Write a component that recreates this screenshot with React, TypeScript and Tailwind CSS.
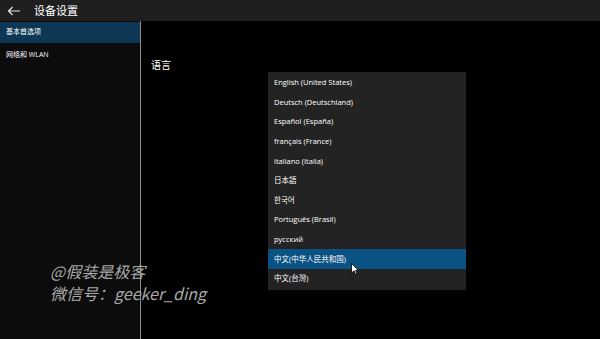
import React from "react";

const langs = [
  "English (United States)",
  "Deutsch (Deutschland)",
  "Español (España)",
  "français (France)",
  "italiano (Italia)",
  "日本語",
  "한국어",
  "Português (Brasil)",
  "русский",
  "中文(中华人民共和国)",
  "中文(台灣)",
];

const font = { fontFamily: '"Open Sans", "Noto Sans CJK SC", "Noto Sans CJK KR", sans-serif' };

const App = () => {
  return (
    <div className="w-[600px] h-[339px] bg-black flex flex-col overflow-hidden relative text-white" style={font}>
      {/* Title bar */}
      <div className="h-[21px] bg-[#1f1f1f] flex items-center shrink-0">
        <svg width="14" height="10" viewBox="0 0 14 10" className="ml-[7px]">
          <path d="M13 5H1.5M5.5 1L1.5 5L5.5 9" stroke="#e6e6e6" strokeWidth="1.2" fill="none" />
        </svg>
        <span className="ml-[13px] text-[11px] leading-none">设备设置</span>
      </div>

      <div className="flex flex-1">
        {/* Sidebar */}
        <div className="w-[141px] bg-[#0c0c0c] border-r border-[#8a8a8a] flex flex-col pt-[1px]">
          <div className="h-[21px] bg-[#0e3756] flex items-center pl-[6px] text-[7px]">基本首选项</div>
          <div className="h-[22px] flex items-center pl-[6px] text-[7px] mt-[1px]">网络和 WLAN</div>
        </div>

        {/* Content */}
        <div className="flex-1 relative">
          <div className="absolute left-[10px] top-[37px] text-[10px]">语言</div>

          {/* Dropdown */}
          <div className="absolute left-[127px] top-[51px] w-[198px] bg-[#232323] py-[1px]">
            {langs.map((l, i) => (
              <div
                key={l}
                className={
                  "h-[19.6px] flex items-center pl-[6px] text-[7.5px] " +
                  (i === 9 ? "bg-[#0a5283]" : "")
                }
              >
                {l}
              </div>
            ))}
          </div>

          {/* Cursor */}
          <svg width="8" height="12" viewBox="0 0 8 12" className="absolute left-[210px] top-[242px]">
            <path d="M0.5 0.5V10L3 7.8L4.6 11.3L6 10.7L4.5 7.3H7.5Z" fill="#fff" stroke="#000" strokeWidth="0.8" />
          </svg>
        </div>
      </div>

      {/* Watermark */}
      <div
        className="absolute left-[50px] top-[260px] text-[#a8a8a8] italic text-[16px] leading-[22px]"
        style={{ fontFamily: '"Noto Sans CJK SC", "Open Sans", sans-serif' }}
      >
        <div className="h-[22px]">@假装是极客</div>
        <div className="h-[22px]">微信号：geeker_ding</div>
      </div>
    </div>
  );
};

export default App;
